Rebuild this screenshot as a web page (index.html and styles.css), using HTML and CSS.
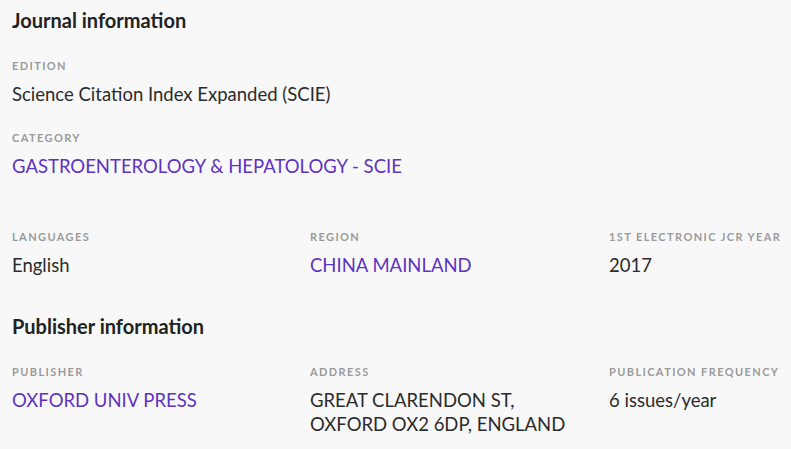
FILE: index.html
```html
<!DOCTYPE html>
<html lang="en">
<head>
    <meta charset="UTF-8">
    <title>Journal profile</title>
    <link rel="stylesheet" href="styles.css">
</head>
<body>
    <section class="info-section">
        <h2 class="section-title">Journal information</h2>

        <div class="field">
            <div class="field-label">Edition</div>
            <div class="field-value">Science Citation Index Expanded (SCIE)</div>
        </div>

        <div class="field">
            <div class="field-label">Category</div>
            <div class="field-value"><a class="link" href="#">GASTROENTEROLOGY &amp; HEPATOLOGY - SCIE</a></div>
        </div>

        <div class="field-grid spaced">
            <div class="field">
                <div class="field-label">Languages</div>
                <div class="field-value">English</div>
            </div>
            <div class="field">
                <div class="field-label">Region</div>
                <div class="field-value"><a class="link" href="#">CHINA MAINLAND</a></div>
            </div>
            <div class="field">
                <div class="field-label">1st Electronic JCR Year</div>
                <div class="field-value">2017</div>
            </div>
        </div>
    </section>

    <section class="info-section">
        <h2 class="section-title">Publisher information</h2>

        <div class="field-grid">
            <div class="field">
                <div class="field-label">Publisher</div>
                <div class="field-value"><a class="link" href="#">OXFORD UNIV PRESS</a></div>
            </div>
            <div class="field">
                <div class="field-label">Address</div>
                <div class="field-value">GREAT CLARENDON ST,<br>OXFORD OX2 6DP, ENGLAND</div>
            </div>
            <div class="field">
                <div class="field-label">Publication Frequency</div>
                <div class="field-value">6 issues/year</div>
            </div>
        </div>
    </section>
</body>
</html>
```

FILE: styles.css
```css
* {
    margin: 0;
    padding: 0;
    box-sizing: border-box;
}

body {
    font-family: Lato, 'Liberation Sans', sans-serif;
    background: #f8f8f9;
    color: #2b2b2b;
    padding: 8px 12px;
    overflow: hidden;
}

.section-title {
    font-size: 20px;
    line-height: 24px;
    font-weight: 700;
    color: #222;
    margin-bottom: 26px;
}

.info-section + .info-section {
    margin-top: 37px;
}

.field {
    margin-bottom: 24px;
}

.field-grid .field {
    margin-bottom: 0;
}

.field-label {
    font-size: 11px;
    line-height: 16px;
    font-weight: 700;
    letter-spacing: 1.4px;
    text-transform: uppercase;
    white-space: nowrap;
    color: #9a9a9a;
    margin-bottom: 8px;
}

.field-value {
    font-size: 18.5px;
    line-height: 24px;
}

.link {
    color: #5e33bf;
    text-decoration: none;
}

.field-grid {
    display: grid;
    grid-template-columns: 298px 299px 1fr;
}

.field-grid.spaced {
    margin-top: 51px;
}
```
